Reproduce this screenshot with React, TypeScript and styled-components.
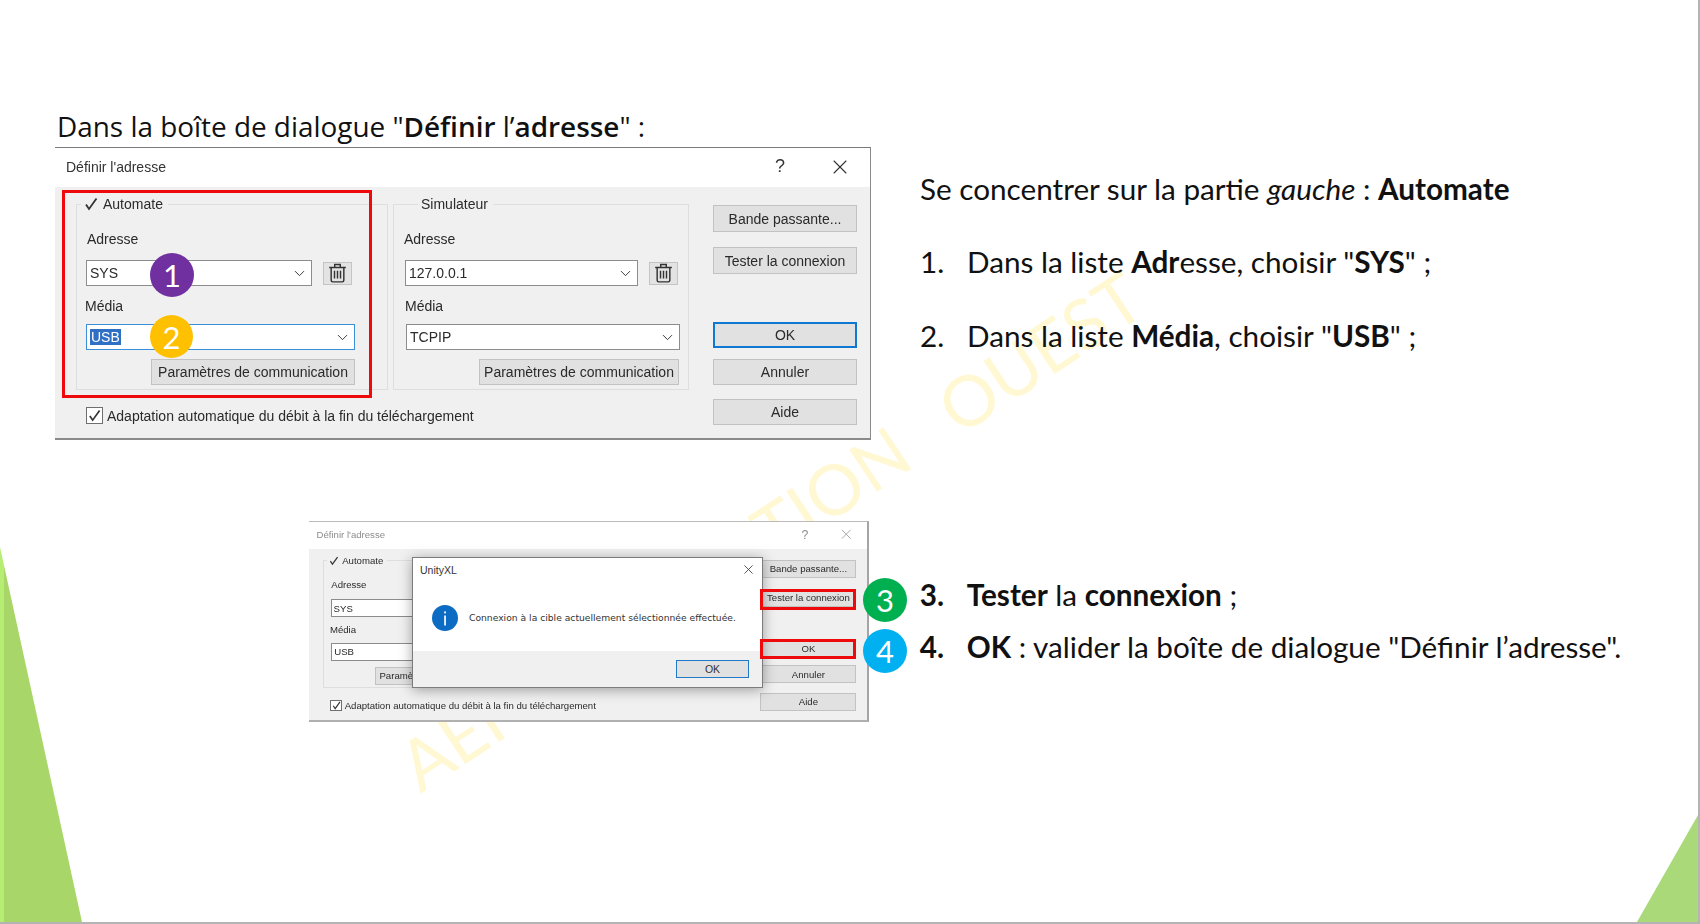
import React from "react";
import styled, { createGlobalStyle } from "styled-components";
import { ChevronDown, X } from "lucide-react";

const GlobalStyle = createGlobalStyle`
  html, body {
    margin: 0;
    background: #fff;
    overflow: hidden;
  }
`;

const Slide = styled.main`
  position: relative;
  isolation: isolate;
  box-sizing: border-box;
  width: 1700px;
  height: 924px;
  padding-top: 112px;
  background: #fff;
  border-right: 2px solid #b4b4b4;
  border-bottom: 2px solid #b4b4b4;
  font-family: "Lato", "Liberation Sans", sans-serif;
  color: #111;
  overflow: hidden;
`;

const Watermark = styled.div`
  position: absolute;
  z-index: -1;
  left: 770px;
  top: 530px;
  transform: translate(-50%, -50%) rotate(-33.5deg);
  white-space: nowrap;
  font-family: "Lato", sans-serif;
  font-weight: 400;
  font-size: 70px;
  word-spacing: 34px;
  color: #fff8d2;
`;

const Wedge = styled.div<{ $side: "left" | "right" }>`
  position: absolute;
  bottom: 0;
  ${(p) =>
    p.$side === "left"
      ? `
    left: 0;
    width: 82px;
    height: 375px;
    background: linear-gradient(90deg, #b6ee74 0 4px, #a8d668 4px);
    clip-path: polygon(0 0, 100% 100%, 0 100%);
  `
      : `
    right: 0;
    width: 61px;
    height: 107px;
    background: #aad97a;
    clip-path: polygon(100% 0, 100% 100%, 0 100%);
  `}
`;

const TopRow = styled.section`
  display: flex;
  padding-left: 55px;
  gap: 49px;
`;

const BottomRow = styled.section`
  display: flex;
  margin-top: 81px;
  padding-left: 309px;
  gap: 51px;
`;

const Heading = styled.h1`
  margin: 0 0 0 2px;
  height: 35px;
  font-family: "Open Sans", sans-serif;
  font-weight: 400;
  font-size: 27.9px;
  line-height: 29px;
  white-space: nowrap;
  color: #111;
  b {
    font-weight: 600;
  }
`;

const Notes = styled.div<{ $top: number }>`
  display: flex;
  flex-direction: column;
  padding-top: ${(p) => p.$top}px;
  font-size: 29.7px;
  line-height: 40px;
  white-space: nowrap;
`;

const Lead = styled.p`
  margin: 0;
`;

const Step = styled.div<{ $gap: number; $strong?: boolean }>`
  display: grid;
  grid-template-columns: 47px 1fr;
  margin-top: ${(p) => p.$gap}px;
  span:first-child {
    font-weight: ${(p) => (p.$strong ? 700 : 400)};
  }
`;

const Stage = styled.div`
  position: relative;
`;

const Window = styled.div<{ $small?: boolean }>`
  box-sizing: border-box;
  width: 816px;
  height: 293px;
  zoom: ${(p) => (p.$small ? 0.686 : 1)};
  display: flex;
  flex-direction: column;
  border-top: ${(p) => (p.$small ? "2px solid #bbb" : "1.5px solid #7a7a7a")};
  border-right: ${(p) => (p.$small ? "3px solid #a5a5a5" : "1.5px solid #8a8a8a")};
  border-bottom: ${(p) => (p.$small ? "3px solid #b0b0b0" : "2px solid #8a8a8a")};
  background: #f0f0f0;
  font-family: "Liberation Sans", sans-serif;
  font-size: 14px;
  color: #2a2a2a;
  filter: blur(0.4px);
`;

const TitleBar = styled.header<{ $faded?: boolean }>`
  box-sizing: border-box;
  flex: 0 0 39px;
  display: flex;
  align-items: center;
  padding: 0 0 2px 11px;
  background: #fff;
  color: ${(p) => (p.$faded ? "#8d8d8d" : "#333")};
`;

const TitleText = styled.span`
  flex: 1;
`;

const HelpMark = styled.span`
  font-size: 18px;
  width: 60px;
  text-align: center;
`;

const CloseMark = styled.span`
  display: flex;
  justify-content: center;
  width: 60px;
`;

const Body = styled.div`
  flex: 1;
  display: grid;
  grid-template-columns: 658px 144px;
`;

const LeftPane = styled.div`
  display: flex;
  flex-direction: column;
`;

const Groups = styled.div`
  display: flex;
  gap: 5px;
  margin: 17px 0 0 21px;
`;

const Group = styled.div<{ $width: number; $inset: number }>`
  position: relative;
  box-sizing: border-box;
  display: flex;
  flex-direction: column;
  width: ${(p) => p.$width}px;
  height: 186px;
  padding: 25px 0 0 ${(p) => p.$inset}px;
  border: 1px solid #dedede;
`;

const Legend = styled.div<{ $left: number }>`
  position: absolute;
  top: -10px;
  left: ${(p) => p.$left}px;
  display: flex;
  align-items: center;
  gap: 5px;
  padding: 0 5px 0 3px;
  height: 18px;
  background: #f0f0f0;
`;

const FieldLabel = styled.label<{ $shift?: number; $gap?: number }>`
  height: 18px;
  line-height: 18px;
  margin-top: ${(p) => p.$gap ?? 0}px;
  margin-left: ${(p) => p.$shift ?? 0}px;
`;

const FieldRow = styled.div<{ $gap: number; $shift?: number }>`
  display: flex;
  align-items: center;
  gap: 11px;
  margin-top: ${(p) => p.$gap}px;
  margin-left: ${(p) => p.$shift ?? 0}px;
`;

const Select = styled.div<{ $width: number; $focus?: boolean }>`
  box-sizing: border-box;
  display: flex;
  align-items: center;
  justify-content: space-between;
  width: ${(p) => p.$width}px;
  height: 26px;
  padding: 0 3px;
  background: #fff;
  border: 1.5px solid ${(p) => (p.$focus ? "#3a8fd6" : "#8c8c8c")};
  color: #2a2a2a;
`;

const Selected = styled.span<{ $on?: boolean }>`
  padding: 0 1px;
  background: ${(p) => (p.$on ? "#2f6fc4" : "transparent")};
  color: ${(p) => (p.$on ? "#fff" : "inherit")};
`;

const IconButton = styled.div`
  box-sizing: border-box;
  display: flex;
  align-items: center;
  justify-content: center;
  width: 29px;
  height: 23px;
  background: #e3e3e3;
  border: 1.5px solid #c4c4c4;
`;

const Button = styled.div<{ $width?: number; $primary?: boolean; $gap?: number; $height?: number }>`
  box-sizing: border-box;
  display: flex;
  align-items: center;
  justify-content: center;
  flex: none;
  width: ${(p) => (p.$width ? `${p.$width}px` : "100%")};
  height: ${(p) => p.$height ?? 26}px;
  margin-top: ${(p) => p.$gap ?? 0}px;
  background: #e1e1e1;
  border: ${(p) => (p.$primary ? "2px solid #0f78d0" : "1.5px solid #c2c2c2")};
  white-space: nowrap;
`;

const RightAligned = styled.div<{ $gap: number; $right: number }>`
  display: flex;
  justify-content: flex-end;
  margin-top: ${(p) => p.$gap}px;
  padding-right: ${(p) => p.$right}px;
`;

const SidePane = styled.div<{ $small?: boolean }>`
  display: flex;
  flex-direction: column;
  padding-top: ${(p) => (p.$small ? 16 : 18)}px;
  margin-right: ${(p) => (p.$small ? 4 : 0)}px;
`;

const CheckRow = styled.div`
  display: flex;
  align-items: center;
  gap: 4px;
  margin: 17px 0 0 31px;
  height: 17px;
  white-space: nowrap;
`;

const CheckBox = styled.span`
  box-sizing: border-box;
  display: flex;
  align-items: center;
  justify-content: center;
  width: 17px;
  height: 17px;
  background: #fff;
  border: 1.5px solid #6f6f6f;
`;

const Badge = styled.div<{ $x: number; $y: number; $size?: number; $color: string }>`
  position: absolute;
  left: ${(p) => p.$x}px;
  top: ${(p) => p.$y}px;
  width: ${(p) => p.$size ?? 44}px;
  height: ${(p) => p.$size ?? 44}px;
  display: flex;
  align-items: center;
  justify-content: center;
  border-radius: 50%;
  background: ${(p) => p.$color};
  color: #fff;
  font-family: "Lato", sans-serif;
  font-size: 31px;
`;

const RedBox = styled.div<{ $x: number; $y: number; $w: number; $h: number }>`
  position: absolute;
  box-sizing: border-box;
  left: ${(p) => p.$x}px;
  top: ${(p) => p.$y}px;
  width: ${(p) => p.$w}px;
  height: ${(p) => p.$h}px;
  border: 3px solid #ee0a0a;
`;

const Modal = styled.div`
  position: absolute;
  left: 103px;
  top: 36px;
  width: 351px;
  height: 131px;
  box-sizing: border-box;
  display: flex;
  flex-direction: column;
  background: #fff;
  border: 1px solid #7c7c7c;
  box-shadow: 0 2px 12px rgba(0, 0, 0, 0.35);
  font-family: "Liberation Sans", sans-serif;
  color: #333;
`;

const ModalHead = styled.div`
  display: flex;
  align-items: center;
  justify-content: space-between;
  height: 23px;
  padding: 0 6px 0 7px;
  font-size: 10.5px;
`;

const ModalMessage = styled.div`
  flex: 1;
  display: flex;
  align-items: center;
  gap: 11px;
  padding: 3px 0 0 19px;
  font-family: "DejaVu Sans", sans-serif;
  font-size: 9.2px;
  white-space: nowrap;
`;

const ModalFoot = styled.div`
  box-sizing: border-box;
  flex: 0 0 36px;
  display: flex;
  justify-content: flex-end;
  align-items: flex-start;
  padding: 9px 13px 0 0;
  background: #f0f0f0;
`;

const ModalOk = styled.div`
  box-sizing: border-box;
  display: flex;
  align-items: center;
  justify-content: center;
  width: 73px;
  height: 18px;
  background: #e1e1e1;
  border: 1.5px solid #1f78c8;
  font-size: 10.5px;
`;

const TrashIcon = () => (
  <svg width="19" height="20" viewBox="0 0 17 18" fill="none" stroke="#333" strokeWidth="1.3">
    <path d="M1 4h15M6 3.6V1.4h5v2.2" />
    <path d="M2.8 4.4v11.2q0 1.4 1.4 1.4h8.6q1.4 0 1.4-1.4V4.4" />
    <path d="M5.8 7v7M8.5 7v7M11.2 7v7" />
  </svg>
);

const CheckMark = ({ size = 14 }: { size?: number }) => (
  <svg width={size} height={size} viewBox="0 0 14 14" fill="none" stroke="#333" strokeWidth="1.8">
    <path d="M2 7.5l3 4.5L12.5 1.5" />
  </svg>
);

const InfoIcon = () => (
  <svg width="26" height="26" viewBox="0 0 26 26">
    <circle cx="13" cy="13" r="13" fill="#0c6cc4" />
    <rect x="12.2" y="10.5" width="1.7" height="10" fill="#fff" />
    <rect x="12.2" y="6.4" width="1.7" height="2" fill="#fff" />
  </svg>
);

const AddressDialog = ({ small }: { small?: boolean }) => (
  <Window $small={small}>
    <TitleBar $faded={small}>
      <TitleText>Définir l'adresse</TitleText>
      <HelpMark>?</HelpMark>
      <CloseMark>
        <X size={24} strokeWidth={1.1} />
      </CloseMark>
    </TitleBar>
    <Body>
      <LeftPane>
        <Groups>
          <Group $width={312} $inset={9}>
            <Legend $left={4}>
              <CheckMark />
              Automate
            </Legend>
            <FieldLabel $shift={1}>Adresse</FieldLabel>
            <FieldRow $gap={12}>
              <Select $width={226}>
                SYS
                <ChevronDown size={17} strokeWidth={1.3} />
              </Select>
              <IconButton>
                <TrashIcon />
              </IconButton>
            </FieldRow>
            <FieldLabel $shift={-1} $gap={11}>
              Média
            </FieldLabel>
            <FieldRow $gap={9}>
              <Select $width={269} $focus={!small}>
                <Selected $on={!small}>USB</Selected>
                <ChevronDown size={17} strokeWidth={1.3} />
              </Select>
            </FieldRow>
            <RightAligned $gap={9} $right={32}>
              <Button $width={204}>Paramètres de communication</Button>
            </RightAligned>
          </Group>
          {small ? (
            <Group $width={296} $inset={11} />
          ) : (
            <Group $width={296} $inset={11}>
              <Legend $left={24}>Simulateur</Legend>
              <FieldLabel $shift={-1}>Adresse</FieldLabel>
              <FieldRow $gap={12}>
                <Select $width={233}>
                  127.0.0.1
                  <ChevronDown size={17} strokeWidth={1.3} />
                </Select>
                <IconButton>
                  <TrashIcon />
                </IconButton>
              </FieldRow>
              <FieldLabel $gap={11}>Média</FieldLabel>
              <FieldRow $gap={9} $shift={1}>
                <Select $width={274}>
                  TCPIP
                  <ChevronDown size={17} strokeWidth={1.3} />
                </Select>
              </FieldRow>
              <RightAligned $gap={9} $right={9}>
                <Button $width={200}>Paramètres de communication</Button>
              </RightAligned>
            </Group>
          )}
        </Groups>
        <CheckRow>
          <CheckBox>
            <CheckMark size={13} />
          </CheckBox>
          Adaptation automatique du débit à la fin du téléchargement
        </CheckRow>
      </LeftPane>
      <SidePane $small={small}>
        <Button $height={27}>Bande passante...</Button>
        <Button $height={27} $gap={15}>
          Tester la connexion
        </Button>
        <Button $gap={48} $primary={!small}>
          OK
        </Button>
        <Button $gap={11}>Annuler</Button>
        <Button $gap={14}>Aide</Button>
      </SidePane>
    </Body>
  </Window>
);

export default function App() {
  return (
    <>
      <GlobalStyle />
      <Slide>
        <Watermark>AEF FORMATION OUEST</Watermark>
        <Wedge $side="left" />
        <Wedge $side="right" />
        <TopRow>
          <div>
            <Heading>
              Dans la boîte de dialogue "<b>Définir</b> l’<b>adresse</b>" :
            </Heading>
            <Stage>
              <AddressDialog />
              <RedBox $x={7} $y={43} $w={310} $h={208} />
              <Badge $x={95} $y={106} $color="#7030a0">
                1
              </Badge>
              <Badge $x={95} $y={168} $size={43} $color="#ffc000">
                2
              </Badge>
            </Stage>
          </div>
          <Notes $top={57}>
            <Lead>
              Se concentrer sur la partie <i>gauche</i> : <b>Automate</b>
            </Lead>
            <Step $gap={33}>
              <span>1.</span>
              <span>
                Dans la liste <b>Adr</b>esse, choisir "<b>SYS</b>" ;
              </span>
            </Step>
            <Step $gap={34}>
              <span>2.</span>
              <span>
                Dans la liste <b>Média</b>, choisir "<b>USB</b>" ;
              </span>
            </Step>
          </Notes>
        </TopRow>
        <BottomRow>
          <Stage>
            <AddressDialog small />
            <Modal>
              <ModalHead>
                UnityXL
                <X size={15} strokeWidth={1.3} />
              </ModalHead>
              <ModalMessage>
                <InfoIcon />
                Connexion à la cible actuellement sélectionnée effectuée.
              </ModalMessage>
              <ModalFoot>
                <ModalOk>OK</ModalOk>
              </ModalFoot>
            </Modal>
            <RedBox $x={451} $y={68} $w={96} $h={21} />
            <RedBox $x={451} $y={118} $w={96} $h={20} />
            <Badge $x={554} $y={57} $color="#00b050">
              3
            </Badge>
            <Badge $x={554} $y={108} $color="#00b0f0">
              4
            </Badge>
          </Stage>
          <Notes $top={54}>
            <Step $gap={0} $strong>
              <span>3.</span>
              <span>
                <b>Tester</b> la <b>connexion</b> ;
              </span>
            </Step>
            <Step $gap={12} $strong>
              <span>4.</span>
              <span>
                <b>OK</b> : valider la boîte de dialogue "Définir l’adresse".
              </span>
            </Step>
          </Notes>
        </BottomRow>
      </Slide>
    </>
  );
}
